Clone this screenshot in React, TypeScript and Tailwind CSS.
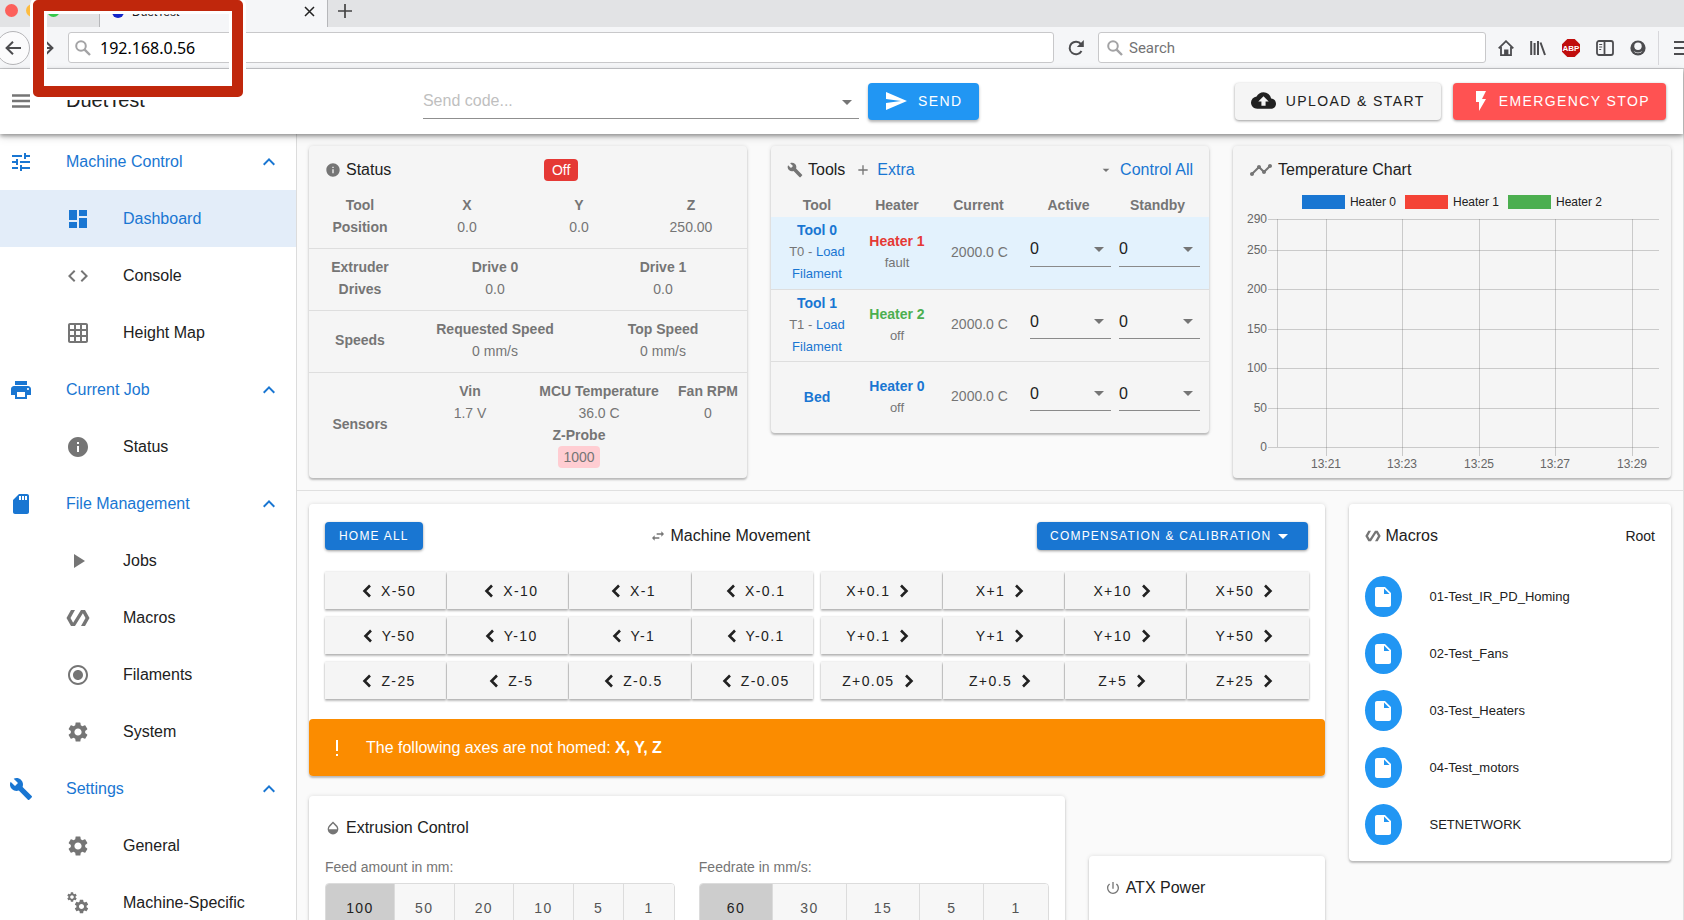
import type { FunctionComponent, JSX, ReactNode } from "react";
import type { IconType } from "react-icons";
import {
  MdAdd,
  MdArrowDropDown,
  MdBuild,
  MdCloudUpload,
  MdCode,
  MdDashboard,
  MdExpandLess,
  MdFlashOn,
  MdGridOn,
  MdInfo,
  MdInsertDriveFile,
  MdOpacity,
  MdPlayArrow,
  MdPolymer,
  MdPowerSettingsNew,
  MdPrint,
  MdRadioButtonChecked,
  MdSend,
  MdSettings,
  MdSdCard,
  MdSwapHoriz,
  MdTimeline,
  MdTune,
} from "react-icons/md";

type NavItem = { label: string; icon: IconType; active?: boolean };
type NavGroup = { label: string; icon: IconType; items: NavItem[] };
type ToolRow = {
  name: string;
  filament?: string;
  heater: string;
  heaterColor: string;
  state: string;
  selected?: boolean;
};

const CogsIcon: IconType = () => (
  <span className="relative block size-6">
    <MdSettings size={12} className="absolute left-0 top-0" />
    <MdSettings size={17} className="absolute bottom-0 right-0" />
  </span>
);

const navGroups: NavGroup[] = [
  {
    label: "Machine Control",
    icon: MdTune,
    items: [
      { label: "Dashboard", icon: MdDashboard, active: true },
      { label: "Console", icon: MdCode },
      { label: "Height Map", icon: MdGridOn },
    ],
  },
  {
    label: "Current Job",
    icon: MdPrint,
    items: [{ label: "Status", icon: MdInfo }],
  },
  {
    label: "File Management",
    icon: MdSdCard,
    items: [
      { label: "Jobs", icon: MdPlayArrow },
      { label: "Macros", icon: MdPolymer },
      { label: "Filaments", icon: MdRadioButtonChecked },
      { label: "System", icon: MdSettings },
    ],
  },
  {
    label: "Settings",
    icon: MdBuild,
    items: [
      { label: "General", icon: MdSettings },
      { label: "Machine-Specific", icon: CogsIcon },
    ],
  },
];

const tools: ToolRow[] = [
  {
    name: "Tool 0",
    filament: "T0",
    heater: "Heater 1",
    heaterColor: "text-[#e53935]",
    state: "fault",
    selected: true,
  },
  {
    name: "Tool 1",
    filament: "T1",
    heater: "Heater 2",
    heaterColor: "text-[#4caf50]",
    state: "off",
  },
  {
    name: "Bed",
    heater: "Heater 0",
    heaterColor: "text-[#1976d2]",
    state: "off",
  },
];

const moves = [
  {
    down: ["X-50", "X-10", "X-1", "X-0.1"],
    up: ["X+0.1", "X+1", "X+10", "X+50"],
  },
  {
    down: ["Y-50", "Y-10", "Y-1", "Y-0.1"],
    up: ["Y+0.1", "Y+1", "Y+10", "Y+50"],
  },
  {
    down: ["Z-25", "Z-5", "Z-0.5", "Z-0.05"],
    up: ["Z+0.05", "Z+0.5", "Z+5", "Z+25"],
  },
];

const macros = [
  "01-Test_IR_PD_Homing",
  "02-Test_Fans",
  "03-Test_Heaters",
  "04-Test_motors",
  "SETNETWORK",
];

const legend = [
  { label: "Heater 0", color: "bg-[#1976d2]" },
  { label: "Heater 1", color: "bg-[#f44336]" },
  { label: "Heater 2", color: "bg-[#4caf50]" },
];

const yTicks = [
  { label: "290", y: 6 },
  { label: "250", y: 37 },
  { label: "200", y: 76 },
  { label: "150", y: 116 },
  { label: "100", y: 155 },
  { label: "50", y: 195 },
  { label: "0", y: 234 },
];

const xTicks = [
  { label: "13:21", x: 93 },
  { label: "13:23", x: 169 },
  { label: "13:25", x: 246 },
  { label: "13:27", x: 322 },
  { label: "13:29", x: 399 },
];

const SearchGlyph = (): JSX.Element => (
  <svg viewBox="0 0 16 16" className="size-4 shrink-0" fill="none" stroke="#a3a3a5" strokeWidth="2">
    <circle cx="6" cy="6" r="4.8" />
    <path d="M9.6 9.6 15 15" strokeWidth="2.4" />
  </svg>
);

const BrowserChrome = (): JSX.Element => (
  <div className="bg-[#f5f6f8] border-b border-[#c9cacd]">
    <div className="flex h-[27px] bg-[#e2e3e5]">
      <div className="flex w-[100px] gap-2 border-r border-[#b6b7ba] pl-[5px] pt-[4px]">
        <span className="size-[13px] rounded-full bg-[#fc605b]" />
        <span className="size-[13px] rounded-full bg-[#fdbc40]" />
        <span className="size-[13px] rounded-full bg-[#34c84a]" />
      </div>
      <div className="flex w-[228px] items-center border-r border-[#b6b7ba] bg-[#f5f6f8] pb-[3px] pl-3 pr-3">
        <span className="size-3 rounded-full bg-[#1226c9]" />
        <span className="ml-2 flex-1 text-xs text-[#1c1c1e]">DuetTest</span>
        <button type="button" aria-label="Close tab" className="pb-[2px]">
          <svg viewBox="0 0 11 11" className="size-[11px]" stroke="#222" strokeWidth="1.5">
            <path d="M1 1 10 10M10 1 1 10" />
          </svg>
        </button>
      </div>
      <button type="button" aria-label="New tab" className="pb-[5px] pl-[10px]">
        <svg viewBox="0 0 14 14" className="size-[14px]" stroke="#444" strokeWidth="1.7">
          <path d="M7 0v14M0 7h14" />
        </svg>
      </button>
    </div>
    <div className="flex h-[41px] items-center">
      <button
        type="button"
        aria-label="Back"
        className="-ml-1 flex size-[34px] shrink-0 items-center justify-center rounded-full border border-[#b5b5b8] bg-[#fbfbfc]"
      >
        <svg viewBox="0 0 16 14" className="h-[14px] w-4" fill="none" stroke="#4c4c4f" strokeWidth="2">
          <path d="M16 7H1.5M8 .8 1.6 7 8 13.2" />
        </svg>
      </button>
      <button type="button" aria-label="Forward" className="ml-2 w-[18px]">
        <svg viewBox="0 0 16 14" className="h-[14px] w-4" fill="none" stroke="#4c4c4f" strokeWidth="2">
          <path d="M0 7h14.5M8 .8 14.4 7 8 13.2" />
        </svg>
      </button>
      <label className="ml-3 flex h-[31px] flex-1 items-center gap-[9px] rounded-[3px] border border-[#c8c8ca] bg-white pl-[6px]">
        <SearchGlyph />
        <input
          aria-label="Address"
          defaultValue="192.168.0.56"
          className="flex-1 bg-transparent font-['Noto_Sans',sans-serif] text-base leading-6 text-black outline-none"
        />
      </label>
      <button type="button" aria-label="Reload" className="mx-[14px]">
        <svg viewBox="0 0 16 16" className="size-4" fill="none" stroke="#4c4c4f" strokeWidth="2">
          <path d="M13.5 11A6.3 6.3 0 1 1 13 4.2" />
          <path d="M15.8 0v7H8.8z" fill="#4c4c4f" stroke="none" />
        </svg>
      </button>
      <label className="flex h-[31px] w-[388px] items-center gap-[6px] rounded-[3px] border border-[#c8c8ca] bg-white pl-2">
        <SearchGlyph />
        <input
          aria-label="Search the web"
          placeholder="Search"
          className="flex-1 bg-transparent pt-px font-['Roboto',sans-serif] text-[15px] outline-none placeholder:text-[#737375]"
        />
      </label>
      <div className="ml-3 flex h-[34px] items-center gap-4 border-r border-[#d7d7db] pr-3">
        <button type="button" aria-label="Home">
          <svg viewBox="0 0 16 16" className="size-4" fill="none" stroke="#4c4c4f" strokeWidth="1.8">
            <path d="M.7 8.4 8 1.2l7.3 7.2" />
            <path d="M3 7v8.1h10V7" />
            <path d="M7 15v-4.5h2.5V15" fill="#4c4c4f" />
          </svg>
        </button>
        <button type="button" aria-label="Library">
          <svg viewBox="0 0 16 16" className="size-4" fill="none" stroke="#4c4c4f" strokeWidth="2">
            <path d="M1.2 1v14M4.6 3v12M8 1v14M10.5 2.5 15 15" />
          </svg>
        </button>
        <button type="button" aria-label="Adblock Plus">
          <svg viewBox="0 0 18 18" className="size-[18px]">
            <path d="M5.3 0h7.4L18 5.3v7.4L12.7 18H5.3L0 12.7V5.3z" fill="#c00d0d" />
            <text
              x="9"
              y="12"
              textAnchor="middle"
              fill="#fff"
              fontSize="8"
              fontWeight="700"
              fontFamily="Liberation Sans, sans-serif"
            >
              ABP
            </text>
          </svg>
        </button>
        <button type="button" aria-label="Sidebars">
          <svg viewBox="0 0 18 16" className="h-4 w-[18px]" fill="none" stroke="#4c4c4f" strokeWidth="1.8">
            <rect x="1" y="1" width="16" height="14" rx="2" />
            <path d="M8.5 1v14" />
            <path d="M3.2 4.5h3M3.2 7h3M3.2 9.5h2" strokeWidth="1.1" />
          </svg>
        </button>
        <button type="button" aria-label="Account">
          <svg viewBox="0 0 16 16" className="size-4">
            <circle cx="8" cy="8" r="7.6" fill="#4c4c4f" />
            <circle cx="8" cy="6.2" r="3.7" fill="#f5f6f8" />
            <path d="M3.6 11.2c1.2.2 2.6 1.3 4.4 1.3s3.2-1.1 4.4-1.3a5.6 5.6 0 0 1-8.8 0z" fill="#f5f6f8" />
          </svg>
        </button>
      </div>
      <button type="button" aria-label="Menu" className="ml-[15px] w-[10px] overflow-hidden">
        <svg viewBox="0 0 16 14" className="h-[14px] w-4" stroke="#4c4c4f" strokeWidth="2">
          <path d="M0 1h16M0 7h16M0 13h16" />
        </svg>
      </button>
    </div>
  </div>
);

const AppBar = (): JSX.Element => (
  <header className="relative z-10 flex h-[65px] shrink-0 items-center bg-white pb-px pr-[17px] shadow-[0_2px_4px_rgba(0,0,0,0.35),0_3px_9px_rgba(0,0,0,0.14)]">
    <button type="button" aria-label="Toggle menu" className="ml-3">
      <svg viewBox="0 0 18 14" className="h-[14px] w-[18px]" stroke="#757575" strokeWidth="2.4">
        <path d="M0 1.5h18M0 7h18M0 12.5h18" />
      </svg>
    </button>
    <h1 className="ml-9 pb-[2px] text-xl text-[#212121]">DuetTest</h1>
    <div className="ml-[278px] mt-[2px] flex h-[34px] min-w-0 max-w-[436px] flex-1 items-center border-b border-[#8f8f8f]">
      <input
        aria-label="Send code"
        placeholder="Send code..."
        className="h-8 min-w-0 flex-1 bg-transparent pb-[2px] text-base outline-none placeholder:text-[#bfbfbf]"
      />
      <button type="button" aria-label="Show code history">
        <MdArrowDropDown size={24} color="#757575" />
      </button>
    </div>
    <button
      type="button"
      className="ml-[9px] flex h-[37px] items-center gap-[10px] rounded bg-[#2196f3] pb-px pl-4 pr-[17px] text-sm tracking-widest text-white shadow-[0_2px_3px_rgba(0,0,0,0.3)]"
    >
      <MdSend size={24} />
      SEND
    </button>
    <button
      type="button"
      className="ml-auto flex h-[37px] items-center gap-[10px] rounded bg-[#f5f5f5] px-4 pb-px text-sm tracking-widest text-[#212121] shadow-[0_1px_3px_rgba(0,0,0,0.4)]"
    >
      <MdCloudUpload size={25} />
      UPLOAD &amp; START
    </button>
    <button
      type="button"
      className="ml-3 flex h-[37px] items-center gap-[6px] rounded bg-[#ff5252] px-4 pb-px text-sm tracking-widest text-white shadow-[0_1px_3px_rgba(0,0,0,0.4)]"
    >
      <MdFlashOn size={24} />
      EMERGENCY STOP
    </button>
  </header>
);

const Sidebar = (): JSX.Element => (
  <nav className="-mt-px w-[297px] shrink-0 border-r border-[#dcdcdc] bg-white text-base">
    {navGroups.map(({ label, icon: Icon, items }) => (
      <div key={label}>
        <button
          type="button"
          className="flex h-[57px] w-full items-center gap-[33px] pl-[9px] pr-[15px] text-[#1976d2]"
        >
          <Icon size={24} />
          <span className="flex-1 text-left">{label}</span>
          <MdExpandLess size={24} />
        </button>
        {items.map(({ label: itemLabel, icon: ItemIcon, active }) => (
          <a
            key={itemLabel}
            href="#"
            className={`flex h-[57px] items-center gap-[33px] pl-[66px] ${
              active ? "bg-[#e3edf9] text-[#1976d2]" : "text-[#212121]"
            }`}
          >
            <span className={active ? "text-[#1976d2]" : "text-[#757575]"}>
              <ItemIcon size={24} />
            </span>
            {itemLabel}
          </a>
        ))}
      </div>
    ))}
  </nav>
);

const Card: FunctionComponent<{ className: string; children: ReactNode }> = ({
  className,
  children,
}) => (
  <section
    className={`rounded shadow-[0_2px_2px_rgba(0,0,0,0.22),0_0_4px_rgba(0,0,0,0.12)] ${className}`}
  >
    {children}
  </section>
);

const CardTitle: FunctionComponent<{ icon: IconType; size?: number; children: string }> = ({
  icon: Icon,
  size = 16,
  children,
}) => (
  <h2 className="flex items-center gap-[5px] text-base text-[#212121]">
    <Icon size={size} color="#757575" />
    {children}
  </h2>
);

const Field: FunctionComponent<{ label: string; value: string; alert?: boolean }> = ({
  label,
  value,
  alert,
}) => (
  <div className="flex-1 text-center">
    <div className="font-bold">{label}</div>
    <div>
      {alert ? (
        <span className="inline-block rounded bg-[#ffcdd2] px-[5px]">{value}</span>
      ) : (
        value
      )}
    </div>
  </div>
);

const StatusRow: FunctionComponent<{ label: string; className: string; children: ReactNode }> = ({
  label,
  className,
  children,
}) => (
  <div className={`flex items-center ${className}`}>
    <div className="w-[102px] shrink-0 px-4 text-center font-bold">{label}</div>
    {children}
  </div>
);

const StatusCard = (): JSX.Element => (
  <Card className="bg-[#f5f5f5] text-sm leading-[22px] text-[#757575]">
    <div className="flex h-12 items-center px-4">
      <CardTitle icon={MdInfo}>Status</CardTitle>
      <div className="flex-1 text-center">
        <span className="inline-block rounded bg-[#e53935] px-2 text-white">Off</span>
      </div>
    </div>
    <StatusRow label="Tool Position" className="border-b border-[#dedede] pb-[10px]">
      <Field label="X" value="0.0" />
      <Field label="Y" value="0.0" />
      <Field label="Z" value="250.00" />
    </StatusRow>
    <StatusRow label="Extruder Drives" className="border-b border-[#dedede] pb-[10px] pt-[7px]">
      <Field label="Drive 0" value="0.0" />
      <Field label="Drive 1" value="0.0" />
    </StatusRow>
    <StatusRow label="Speeds" className="border-b border-[#dedede] pb-[10px] pt-[7px]">
      <Field label="Requested Speed" value="0 mm/s" />
      <Field label="Top Speed" value="0 mm/s" />
    </StatusRow>
    <StatusRow label="Sensors" className="pb-[10px] pt-[7px]">
      <div className="flex-1">
        <div className="grid grid-cols-[118fr_140fr_78fr]">
          <Field label="Vin" value="1.7 V" />
          <Field label="MCU Temperature" value="36.0 C" />
          <Field label="Fan RPM" value="0" />
        </div>
        <Field label="Z-Probe" value="1000" alert />
      </div>
    </StatusRow>
  </Card>
);

const TempSelect: FunctionComponent<{ label: string }> = ({ label }) => (
  <div className="relative mb-1 border-b border-[#8a8a8a]">
    <select
      aria-label={label}
      className="block h-[33px] w-full appearance-none bg-transparent text-base text-[#212121] outline-none"
    >
      <option>0</option>
    </select>
    <MdArrowDropDown size={24} className="pointer-events-none absolute right-0 top-1" />
  </div>
);

const ToolsCard = (): JSX.Element => (
  <Card className="bg-[#f5f5f5] text-sm leading-[22px] text-[#757575]">
    <div className="flex h-12 items-center px-4 text-base">
      <CardTitle icon={MdBuild}>Tools</CardTitle>
      <a href="#" className="ml-[10px] flex items-center gap-[6px] text-[#1976d2]">
        <MdAdd size={16} color="#757575" />
        Extra
      </a>
      <a href="#" className="ml-auto flex items-center gap-[6px] text-[#1976d2]">
        <MdArrowDropDown size={16} color="#757575" />
        Control All
      </a>
    </div>
    <table className="w-full table-fixed text-center">
      <colgroup>
        <col className="w-[92px]" />
        <col className="w-[68px]" />
        <col />
        <col className="w-[89px]" />
        <col className="w-[94px]" />
      </colgroup>
      <thead>
        <tr className="h-[23px]">
          <th className="pb-px">Tool</th>
          <th className="pb-px">Heater</th>
          <th className="pb-px">Current</th>
          <th className="pb-px pr-1">Active</th>
          <th className="pb-px pr-[9px]">Standby</th>
        </tr>
      </thead>
      <tbody>
        {tools.map(({ name, filament, heater, heaterColor, state, selected }) => (
          <tr
            key={name}
            className={`h-[72px] border-b border-[#dedede] last:border-b-0 ${
              selected ? "bg-[#e3f2fd]" : ""
            }`}
          >
            <td className="pb-px">
              <a href="#" className="block font-bold text-[#1976d2]">
                {name}
              </a>
              {filament && (
                <div className="text-[13px]">
                  <span>{filament} - </span>
                  <a href="#" className="text-[#1976d2]">
                    <span>Load</span>
                    <br />
                    <span>Filament</span>
                  </a>
                </div>
              )}
            </td>
            <td className="whitespace-nowrap pb-px">
              <div className={`font-bold ${heaterColor}`}>{heater}</div>
              <div className="text-[13px]">{state}</div>
            </td>
            <td className="pb-[2px] pl-[2px]">2000.0 C</td>
            <td className="px-1 pb-[2px]">
              <TempSelect label={`${name} active temperature`} />
            </td>
            <td className="pb-[2px] pl-1 pr-[9px]">
              <TempSelect label={`${name} standby temperature`} />
            </td>
          </tr>
        ))}
      </tbody>
    </table>
  </Card>
);

const ChartCard = (): JSX.Element => (
  <Card className="bg-[#f5f5f5]">
    <div className="flex h-12 items-center px-4">
      <CardTitle icon={MdTimeline} size={24}>
        Temperature Chart
      </CardTitle>
    </div>
    <div className="flex h-[19px] items-center justify-center gap-[9px] pb-[3px] text-xs text-[#212121]">
      {legend.map(({ label, color }) => (
        <span key={label} className="flex items-center gap-[5px]">
          <span className={`h-[14px] w-[43px] ${color}`} />
          {label}
        </span>
      ))}
    </div>
    <svg
      viewBox="0 0 438 265"
      className="w-full"
      fontFamily="Liberation Sans, sans-serif"
      fontSize="12"
      fill="#666"
      shapeRendering="crispEdges"
    >
      {yTicks.map(({ label, y }) => (
        <g key={label}>
          <rect x="35" y={y} width="391" height="1" fillOpacity="0.3" />
          <text x="34" y={y + 4} textAnchor="end">
            {label}
          </text>
        </g>
      ))}
      <rect x="44" y="6" width="1" height="228" fillOpacity="0.3" />
      {xTicks.map(({ label, x }) => (
        <g key={label}>
          <rect x={x} y="6" width="1" height="237" fillOpacity="0.3" />
          <text x={x} y="255" textAnchor="middle">
            {label}
          </text>
        </g>
      ))}
    </svg>
  </Card>
);

const Chevron: FunctionComponent<{ points: string }> = ({ points }) => (
  <svg viewBox="0 0 24 24" className="size-6" fill="none" stroke="currentColor" strokeWidth="2.6">
    <polyline points={points} />
  </svg>
);

const moveButton =
  "flex h-[37px] flex-1 items-center justify-center gap-[2px] bg-[#f5f5f5] shadow-[0_2px_2px_rgba(0,0,0,0.25),0_0_2px_rgba(0,0,0,0.18)]";

const MovementCard = (): JSX.Element => (
  <Card className="bg-white">
    <div className="flex items-center justify-between px-4 pt-[18px]">
      <button
        type="button"
        className="h-7 rounded bg-[#1976d2] px-[14px] text-xs tracking-widest text-white shadow-[0_1px_3px_rgba(0,0,0,0.4)]"
      >
        HOME ALL
      </button>
      <CardTitle icon={MdSwapHoriz}>Machine Movement</CardTitle>
      <button
        type="button"
        className="flex h-7 items-center rounded bg-[#1976d2] px-[13px] text-xs tracking-widest text-white shadow-[0_1px_3px_rgba(0,0,0,0.4)]"
      >
        COMPENSATION &amp; CALIBRATION
        <MdArrowDropDown size={24} />
      </button>
    </div>
    <div className="flex flex-col gap-2 px-4 pb-5 pt-[22px] text-sm tracking-widest text-[#212121]">
      {moves.map(({ down, up }) => (
        <div key={down[0]} className="flex gap-2">
          <div className="flex flex-1 gap-px">
            {down.map((label) => (
              <button key={label} type="button" className={moveButton}>
                <Chevron points="15,6.5 9.500,12 15,17.500" />
                {label}
              </button>
            ))}
          </div>
          <div className="flex flex-1 gap-px">
            {up.map((label) => (
              <button key={label} type="button" className={moveButton}>
                {label}
                <Chevron points="9,6.5 14.500,12 9,17.500" />
              </button>
            ))}
          </div>
        </div>
      ))}
    </div>
    <div
      role="alert"
      className="flex h-[57px] items-center rounded bg-[#fb8c00] pl-4 text-base text-white"
    >
      <svg viewBox="0 0 24 24" className="size-6" fill="currentColor">
        <path d="M11 4h2v11h-2zM11 18h2v2h-2z" />
      </svg>
      <p className="ml-[17px]">
        The following axes are not homed: <strong>X, Y, Z</strong>
      </p>
    </div>
  </Card>
);

const Amounts: FunctionComponent<{ label: string; values: number[] }> = ({ label, values }) => (
  <fieldset className="flex-1">
    <legend className="text-sm leading-[22px] text-[#757575]">{label}</legend>
    <div className="mt-[5px] flex divide-x divide-[#dcdcdc] overflow-hidden rounded border border-[#dcdcdc] text-sm tracking-widest">
      {values.map((value, i) => (
        <button
          key={value}
          type="button"
          aria-pressed={i === 0}
          className={`h-12 flex-auto ${
            i === 0 ? "bg-[#cdcdcd] text-[#212121]" : "bg-[#f7f7f7] text-[#555]"
          }`}
        >
          {value}
        </button>
      ))}
    </div>
  </fieldset>
);

const MacrosCard = (): JSX.Element => (
  <Card className="bg-white pb-2">
    <div className="flex h-16 items-center justify-between px-4">
      <CardTitle icon={MdPolymer}>Macros</CardTitle>
      <a href="#" className="text-sm text-[#212121]">
        Root
      </a>
    </div>
    <ul className="text-[13px] text-[#212121]">
      {macros.map((name) => (
        <li key={name}>
          <a href="#" className="flex h-[57px] items-center gap-7 px-4">
            <span className="flex h-[41px] w-[37px] items-center justify-center rounded-[50%] bg-[#2196f3] text-white">
              <MdInsertDriveFile size={24} />
            </span>
            {name}
          </a>
        </li>
      ))}
    </ul>
  </Card>
);

const Dashboard = (): JSX.Element => (
  <main className="min-w-0 flex-1 bg-[#fafafa]">
    <div className="grid grid-cols-3 items-start gap-6 border-b border-[#e0e0e0] p-3">
      <StatusCard />
      <ToolsCard />
      <ChartCard />
    </div>
    <div className="flex items-start pt-[13px]">
      <div className="w-3/4 px-3">
        <MovementCard />
        <div className="-mx-3 mt-5 flex items-start">
          <div className="w-3/4 px-3">
            <Card className="bg-white px-4 pb-4">
              <div className="flex h-[60px] items-center pt-1">
                <CardTitle icon={MdOpacity}>Extrusion Control</CardTitle>
              </div>
              <div className="flex gap-6">
                <Amounts label="Feed amount in mm:" values={[100, 50, 20, 10, 5, 1]} />
                <Amounts label="Feedrate in mm/s:" values={[60, 30, 15, 5, 1]} />
              </div>
            </Card>
          </div>
          <div className="w-1/4 px-3 pt-[60px]">
            <Card className="bg-white px-4 pb-4">
              <div className="flex h-16 items-center">
                <CardTitle icon={MdPowerSettingsNew}>ATX Power</CardTitle>
              </div>
            </Card>
          </div>
        </div>
      </div>
      <div className="w-1/4 px-3">
        <MacrosCard />
      </div>
    </div>
  </main>
);

const App = (): JSX.Element => (
  <div className="relative h-screen overflow-hidden bg-white font-['Liberation_Sans',Arial,sans-serif]">
    <BrowserChrome />
    <div className="border-r border-[#e0e0e0]">
      <AppBar />
      <div className="flex">
        <Sidebar />
        <Dashboard />
      </div>
    </div>
    {/* highlight around the address bar */}
    <div className="pointer-events-none absolute left-[33px] top-0 z-20 h-[97px] w-[210px] rounded-[5px] border-[11px] border-[#c0270c] shadow-[0_0_0_3px_#fff,inset_0_0_0_3px_#fff]" />
  </div>
);

export default App;
